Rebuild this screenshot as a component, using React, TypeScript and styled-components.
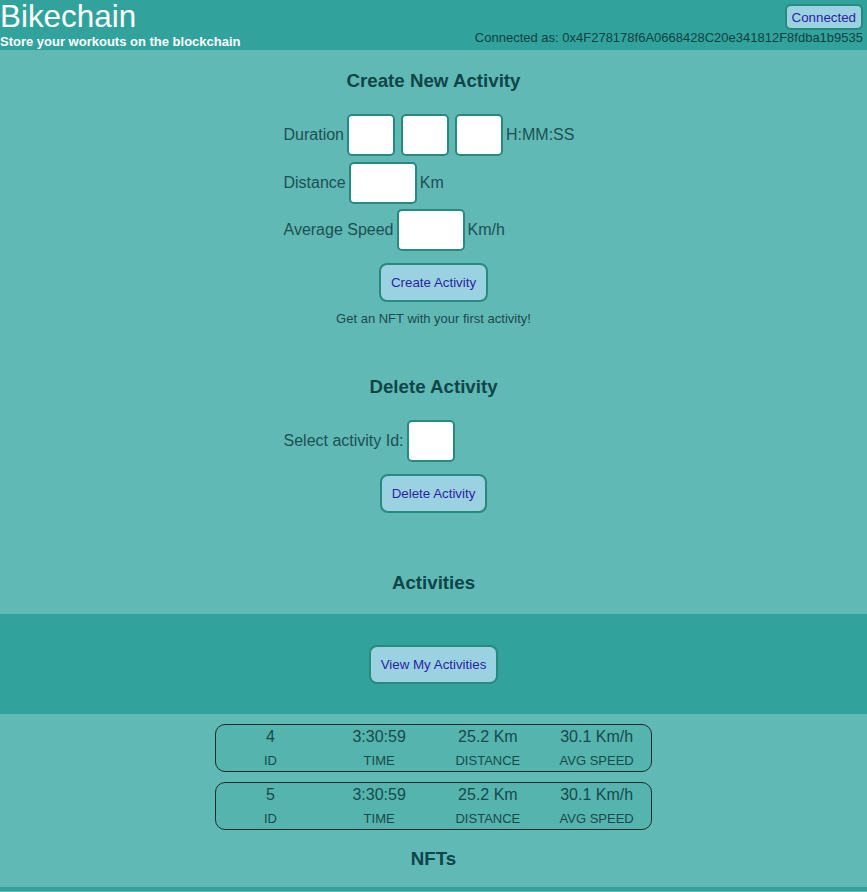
import React from "react";
import styled, { createGlobalStyle } from "styled-components";

const Global = createGlobalStyle`
  html, body { margin: 0; padding: 0; background: #61b9b5; }
  body { font-family: "Liberation Sans", Arial, sans-serif; }
  * { box-sizing: border-box; }
`;

const Page = styled.div`
  width: 867px;
  min-height: 892px;
  background: #61b9b5;
  display: flex;
  flex-direction: column;
  align-items: stretch;
`;

const Header = styled.header`
  height: 50px;
  background: #31a39c;
  display: flex;
  justify-content: space-between;
  align-items: flex-start;
`;

const Brand = styled.div`
  display: flex;
  flex-direction: column;
`;

const Title = styled.div`
  font-size: 31.4px;
  line-height: 34px;
  color: #ffffff;
`;

const Subtitle = styled.div`
  font-size: 13px;
  line-height: 16px;
  font-weight: bold;
  color: #ffffff;
`;

const Account = styled.div`
  display: flex;
  flex-direction: column;
  align-items: flex-end;
  padding: 4px 4px 0 0;
`;

const Address = styled.div`
  font-size: 13px;
  line-height: 16px;
  color: #123f44;
`;

const Button = styled.button<{ $small?: boolean }>`
  font-family: "Liberation Sans", Arial, sans-serif;
  font-size: 13.33px;
  line-height: 15px;
  margin: 0;
  height: ${(p) => (p.$small ? "26px" : "39px")};
  padding: ${(p) => (p.$small ? "0 5px" : "0 10px")};
  background: #9bd2e2;
  color: #2b1fa3;
  border: 2px solid #288a7e;
  border-radius: ${(p) => (p.$small ? "6px" : "8px")};
  cursor: pointer;
`;

const Heading = styled.h3<{ $top: number }>`
  margin: ${(p) => p.$top}px 0 0 0;
  font-size: 18.72px;
  line-height: 22px;
  font-weight: bold;
  color: #0e4549;
  text-align: center;
`;

const Form = styled.div<{ $top: number }>`
  width: 300px;
  margin: ${(p) => p.$top}px auto 0 auto;
  display: flex;
  flex-direction: column;
  gap: 5.5px;
`;

const Row = styled.div`
  display: flex;
  align-items: center;
  gap: 3px;
  font-size: 16px;
  color: #1b5054;
`;

const Label = styled.span``;

const Input = styled.input<{ $w: number }>`
  width: ${(p) => p.$w}px;
  height: 42px;
  border: 2px solid #288a7e;
  border-radius: 5px;
  background: #ffffff;
  margin: 0;
  padding: 0;
  & + & {
    margin-left: 3px;
  }
`;

const Centered = styled.div<{ $top: number }>`
  margin-top: ${(p) => p.$top}px;
  display: flex;
  justify-content: center;
`;

const Note = styled.div`
  margin-top: 9px;
  font-size: 13px;
  line-height: 16px;
  color: #1b4a4e;
  text-align: center;
`;

const Band = styled.div`
  margin-top: 20px;
  height: 100px;
  background: #31a39c;
  display: flex;
  align-items: center;
  justify-content: center;
`;

const List = styled.div`
  margin: 10px auto 0 auto;
  width: 437px;
  display: flex;
  flex-direction: column;
  gap: 10px;
`;

const Card = styled.div`
  height: 48px;
  border: 1px solid #1c2b2b;
  border-radius: 10px;
  background: #55b4ad;
  display: grid;
  grid-template-columns: repeat(4, 1fr);
  align-content: start;
  text-align: center;
  color: #174a4e;
`;

const Cell = styled.div`
  display: flex;
  flex-direction: column;
  align-items: center;
  padding-top: 1px;
`;

const Value = styled.div`
  font-size: 16px;
  line-height: 22px;
`;

const Caption = styled.div`
  margin-top: 5px;
  font-size: 13px;
  line-height: 16px;
  text-transform: uppercase;
`;

const Footer = styled.div`
  margin-top: 17px;
  height: 4px;
  background: #31a39c;
`;

const activities = [
  { id: 4, time: "3:30:59", distance: "25.2 Km", speed: "30.1 Km/h" },
  { id: 5, time: "3:30:59", distance: "25.2 Km", speed: "30.1 Km/h" },
];

export default function App() {
  return (
    <Page>
      <Global />
      <Header>
        <Brand>
          <Title>Bikechain</Title>
          <Subtitle>Store your workouts on the blockchain</Subtitle>
        </Brand>
        <Account>
          <Button $small>Connected</Button>
          <Address>Connected as: 0x4F278178f6A0668428C20e341812F8fdba1b9535</Address>
        </Account>
      </Header>

      <Heading $top={20}>Create New Activity</Heading>
      <Form $top={22}>
        <Row>
          <Label>Duration</Label>
          <Input $w={48} />
          <Input $w={48} />
          <Input $w={48} />
          <Label>H:MM:SS</Label>
        </Row>
        <Row>
          <Label>Distance</Label>
          <Input $w={68} />
          <Label>Km</Label>
        </Row>
        <Row>
          <Label>Average Speed</Label>
          <Input $w={68} />
          <Label>Km/h</Label>
        </Row>
      </Form>
      <Centered $top={12}>
        <Button>Create Activity</Button>
      </Centered>
      <Note>Get an NFT with your first activity!</Note>

      <Heading $top={49}>Delete Activity</Heading>
      <Form $top={22}>
        <Row>
          <Label>Select activity Id:</Label>
          <Input $w={48} />
        </Row>
      </Form>
      <Centered $top={12}>
        <Button>Delete Activity</Button>
      </Centered>

      <Heading $top={59}>Activities</Heading>
      <Band>
        <Button>View My Activities</Button>
      </Band>
      <List>
        {activities.map((a) => (
          <Card key={a.id}>
            <Cell>
              <Value>{a.id}</Value>
              <Caption>Id</Caption>
            </Cell>
            <Cell>
              <Value>{a.time}</Value>
              <Caption>Time</Caption>
            </Cell>
            <Cell>
              <Value>{a.distance}</Value>
              <Caption>Distance</Caption>
            </Cell>
            <Cell>
              <Value>{a.speed}</Value>
              <Caption>Avg Speed</Caption>
            </Cell>
          </Card>
        ))}
      </List>
      <Heading $top={18}>NFTs</Heading>
      <Footer />
    </Page>
  );
}
